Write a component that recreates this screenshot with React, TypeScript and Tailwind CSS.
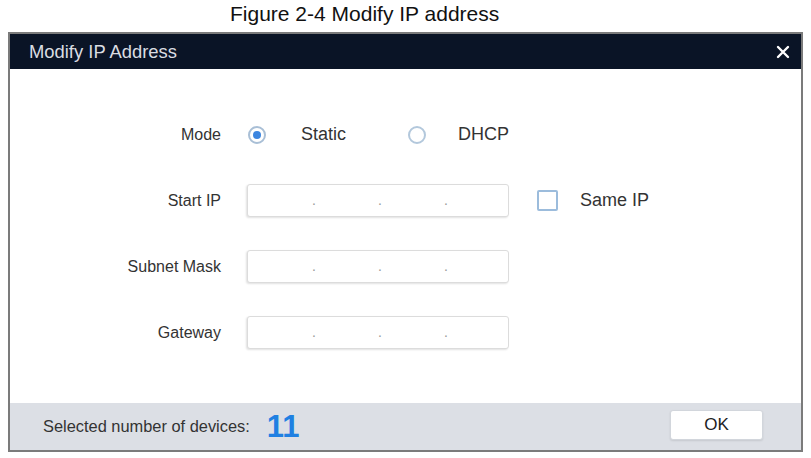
import React from 'react';

const IpBox: React.FC = () => (
  <div className="w-[262px] h-[33px] rounded-[3px] border border-[#dcdcdc] bg-white shadow-[-1px_1px_2px_rgba(0,0,0,0.12)] flex items-center text-[14px] text-[#9a9a9a]">
    <span className="w-[64px]" />
    <span className="w-[4px] text-center">.</span>
    <span className="w-[62px]" />
    <span className="w-[4px] text-center">.</span>
    <span className="w-[62px]" />
    <span className="w-[4px] text-center">.</span>
    <span className="flex-1" />
  </div>
);

const Radio: React.FC<{ checked?: boolean; label: string; gap: string }> = ({ checked, label, gap }) => (
  <div className={`flex items-center ${gap}`}>
    <span
      className={
        checked
          ? 'w-[18px] h-[18px] rounded-full border-2 border-[#a9bfd6] bg-white flex items-center justify-center'
          : 'w-[18px] h-[18px] rounded-full border-2 border-[#b3c8dc] bg-white'
      }
    >
      {checked && <span className="w-[8px] h-[8px] rounded-full bg-[#3c86e0]" />}
    </span>
    <span className="text-[18px] text-[#333]">{label}</span>
  </div>
);

const Row: React.FC<{ label: string; children: React.ReactNode }> = ({ label, children }) => (
  <div className="flex items-center h-[33px]">
    <span className="w-[211px] text-right text-[16px] text-[#333]">{label}</span>
    <div className="ml-[26px] flex items-center">{children}</div>
  </div>
);

export default function App() {
  return (
    <div className="w-[811px] h-[458px] bg-white font-['Liberation_Sans',Arial,sans-serif]">
      {/* caption */}
      <div className="h-[32px] pl-[230px] pt-[1px] text-[21px] leading-[26px] text-[#111]">
        Figure 2-4 Modify IP address
      </div>

      <div className="ml-[8px] w-[795px] h-[420px] border-2 border-[#7b7b7b] flex flex-col">
        {/* header */}
        <div className="h-[35px] bg-[#0a1426] flex items-center justify-between pl-[19px] pr-[11px]">
          <span className="text-[18.4px] text-[#dadde2]">Modify IP Address</span>
          <svg width="14" height="14" viewBox="0 0 14 14">
            <path d="M2 2 L12 12 M12 2 L2 12" stroke="#ffffff" strokeWidth="2.4" strokeLinecap="round" />
          </svg>
        </div>

        {/* body */}
        <div className="flex-1 bg-white pt-[49px] flex flex-col gap-[33px]">
          <Row label="Mode">
            <div className="flex items-center gap-[62px] pl-[1px]">
              <Radio checked label="Static" gap="gap-[35px]" />
              <Radio label="DHCP" gap="gap-[32px]" />
            </div>
          </Row>
          <Row label="Start IP">
            <IpBox />
            <span className="ml-[28px] w-[21px] h-[21px] rounded-[2px] border-2 border-[#9cbcdc] bg-white" />
            <span className="ml-[22px] text-[18px] text-[#333]">Same IP</span>
          </Row>
          <Row label="Subnet Mask">
            <IpBox />
          </Row>
          <Row label="Gateway">
            <IpBox />
          </Row>
        </div>

        {/* footer */}
        <div className="h-[47px] bg-[#dcdfe5] flex items-center justify-between pl-[33px] pr-[38px]">
          <div className="flex items-center">
            <span className="text-[16.4px] text-[#333]">Selected number of devices:</span>
            <span className="ml-[17px] text-[31px] leading-none font-bold text-[#1f80e2]">11</span>
          </div>
          <button className="w-[93px] h-[30px] -mt-[4px] rounded-[3px] border border-[#d2d6dc] bg-white shadow-[0_1px_2px_rgba(0,0,0,0.1)] text-[17px] text-[#222]">
            OK
          </button>
        </div>
      </div>
    </div>
  );
}
